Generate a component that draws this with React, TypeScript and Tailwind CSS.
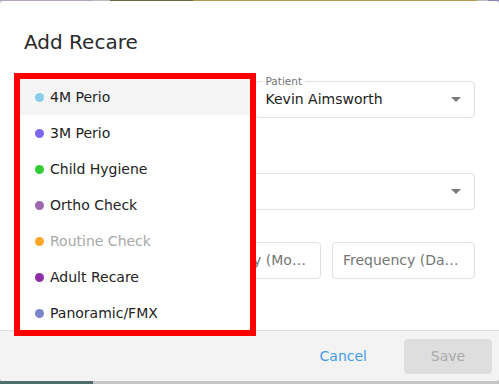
import React from 'react'

type RecareType = {
    name: string
    color: string
    disabled?: boolean
}

const recareTypes: RecareType[] = [
    { name: '4M Perio', color: '#87ceeb' },
    { name: '3M Perio', color: '#7b68ee' },
    { name: 'Child Hygiene', color: '#32cd32' },
    { name: 'Ortho Check', color: '#9c68b0' },
    { name: 'Routine Check', color: '#ffa726', disabled: true },
    { name: 'Adult Recare', color: '#8e2fa8' },
    { name: 'Panoramic/FMX', color: '#7986cb' },
]

const Arrow: React.FC = () => (
    <svg width="10" height="5" viewBox="0 0 10 5" className="shrink-0">
        <path d="M0 0h10L5 5z" fill="#7a7a7a" />
    </svg>
)

const App: React.FC = () => {
    return (
        <div className="relative h-[384px] w-[499px] overflow-hidden bg-[#cfcfcf] font-['DejaVu_Sans',sans-serif]">
            {/* page peeking out behind the dialog */}
            <div className="flex h-px">
                <div className="w-[93px] bg-[#b3a4c3]" />
                <div className="w-[17px] bg-[#bdbdbd]" />
                <div className="w-[83px] bg-[#6f6440]" />
                <div className="w-[284px] bg-[#b39c4b]" />
                <div className="w-[11px] bg-[#bcbcbc]" />
                <div className="flex-1 bg-[#8b83c4]" />
            </div>

            <div className="flex h-[380px] flex-col overflow-hidden rounded-[4px] bg-white">
                <h2 className="px-6 pt-[27px] text-[20px] leading-[28px] text-[#2b2b2b]">
                    Add Recare
                </h2>

                <div className="px-6">
                    {/* the menu covers the left column */}
                    <div className="mt-[25px] grid grid-cols-2 gap-x-[10px]">
                        <div className="flex h-[37px] items-center justify-end rounded-[4px] border border-[#e0e0e0] pr-[13px]">
                            <Arrow />
                        </div>
                        <div className="relative flex h-[37px] items-center rounded-[4px] border border-[#e0e0e0] pl-[10px] pr-[13px]">
                            <span className="absolute left-[7px] top-[-6px] bg-white px-[3px] text-[10.5px] leading-none text-[#757575]">
                                Patient
                            </span>
                            <span className="flex-1 text-[14px] text-[#222]">
                                Kevin Aimsworth
                            </span>
                            <Arrow />
                        </div>
                    </div>

                    <div className="mt-[55px] flex h-[37px] items-center justify-end rounded-[4px] border border-[#e0e0e0] pr-[13px]">
                        <Arrow />
                    </div>

                    <div className="mt-[32px] grid grid-cols-3 gap-x-[11px]">
                        <div className="h-[37px] rounded-[4px] border border-[#e0e0e0]" />
                        {['Frequency (Months)', 'Frequency (Days)'].map((p) => (
                            <div
                                key={p}
                                className="flex h-[37px] min-w-0 items-center rounded-[4px] border border-[#e0e0e0] pl-[10px] pr-[8.5px]"
                            >
                                <span className="truncate text-[14px] text-[#757575]">
                                    {p}
                                </span>
                            </div>
                        ))}
                    </div>
                </div>

                <div className="mt-auto flex h-[51px] items-center justify-end border-t border-[#dcdcdc] bg-[#f3f3f3] pr-[7px]">
                    <button className="mr-[37px] text-[14px] text-[#449be8]">
                        Cancel
                    </button>
                    <button
                        disabled
                        className="h-[35px] w-[88px] rounded-[4px] bg-[#dedede] text-[14px] text-[#a9a9a9]"
                    >
                        Save
                    </button>
                </div>
            </div>

            <div className="flex h-[3px]">
                <div className="w-[93px] bg-[#4f6d6a]" />
                <div className="flex-1 bg-[#c4c4c4]" />
            </div>

            {/* open dropdown menu */}
            <div className="absolute left-[14px] top-[73px] h-[263px] w-[242px] overflow-hidden border-[6px] border-[#ff0000] bg-white">
                {recareTypes.map((t, i) => (
                    <div
                        key={t.name}
                        className={
                            'flex h-[36px] items-center gap-[6px] pl-[15px] text-[14px] ' +
                            (i === 0 ? 'bg-[#f5f5f5] ' : '') +
                            (t.disabled ? 'text-[#a8a8a8]' : 'text-[#222]')
                        }
                    >
                        <span
                            className="h-[9px] w-[9px] shrink-0 rounded-full"
                            style={{ backgroundColor: t.color }}
                        />
                        {t.name}
                    </div>
                ))}
            </div>
        </div>
    )
}

export default App
